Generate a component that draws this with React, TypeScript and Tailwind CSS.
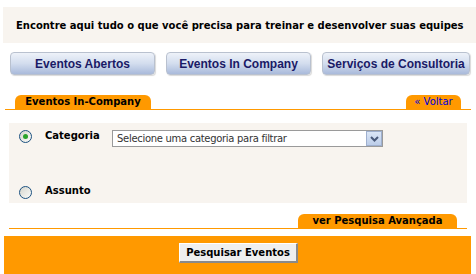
import React from "react";

const font = { fontFamily: '"DejaVu Sans", Verdana, sans-serif' };

function NavButton({ label, width }: { label: string; width: string }) {
  return (
    <div
      className={`${width} flex h-[23px] items-center justify-center rounded-[4px] border border-[#b9c1cf] bg-gradient-to-b from-[#eef2f9] via-[#d3ddee] to-[#a9badb] text-[12px] font-bold text-[#1a1a66] shadow-[1px_1px_1px_rgba(0,0,0,0.15)]`}
      style={{ fontFamily: '"Liberation Sans", Arial, sans-serif' }}
    >
      {label}
    </div>
  );
}

function Radio({ checked }: { checked?: boolean }) {
  return (
    <div className="flex h-[13px] w-[13px] shrink-0 items-center justify-center rounded-full border border-[#1c5180] bg-gradient-to-br from-[#d6d6ce] to-[#fbfbf9]">
      {checked && <div className="h-[5px] w-[5px] rounded-full bg-[#2aa32a]" />}
    </div>
  );
}

export default function App() {
  return (
    <div className="relative h-[274px] w-[476px] overflow-hidden bg-white" style={font}>
      {/* Intro band */}
      <div className="ml-[3px] mt-[7px] flex h-[36px] items-center bg-[#f8f4ef] pl-[13px] text-[10px] font-bold text-black">
        Encontre aqui tudo o que você precisa para treinar e desenvolver suas equipes
      </div>

      {/* Nav buttons */}
      <div className="ml-[10px] mt-[9px] flex gap-[11px]">
        <NavButton label="Eventos Abertos" width="w-[145px]" />
        <NavButton label="Eventos In Company" width="w-[145px]" />
        <NavButton label="Serviços de Consultoria" width="w-[148px]" />
      </div>

      {/* Tabs */}
      <div className="ml-[5px] mt-[20px] flex h-[15px] w-[466px] items-end justify-between border-b border-[#ff9900]">
        <div className="ml-[10px] flex h-[14px] w-[136px] items-center justify-center rounded-t-[6px] bg-[#ff9900] text-[10px] font-bold leading-none text-black">
          Eventos In-Company
        </div>
        <div className="mr-[10px] flex h-[14px] w-[55px] items-center justify-center rounded-t-[6px] bg-[#ff9900] text-[10px] leading-none text-[#0000dd]">
          « Voltar
        </div>
      </div>

      {/* Filter box */}
      <div className="ml-[9px] mt-[13px] h-[80px] w-[458px] bg-[#f8f4ef] pl-[10px] pt-[7px]">
        <div className="flex items-start">
          <Radio checked />
          <div className="ml-[13px] w-[67px] text-[10px] font-bold leading-[12px] text-black">Categoria</div>
          <div className="flex h-[17px] w-[271px] items-center border border-[#9a9a9a] bg-white">
            <span className="flex-1 pl-[4px] text-[10px] tracking-[-0.3px] text-[#333]">
              Selecione uma categoria para filtrar
            </span>
            <div className="flex h-[15px] w-[16px] items-center justify-center border border-[#9fb0cf] bg-gradient-to-b from-[#dbe6f6] to-[#bccde9]">
              <svg width="9" height="6" viewBox="0 0 9 6">
                <path d="M1 1 L4.5 4.5 L8 1" fill="none" stroke="#4a5a7a" strokeWidth="2" />
              </svg>
            </div>
          </div>
        </div>
        <div className="mt-[39px] flex items-start">
          <Radio />
          <div className="ml-[13px] -mt-[1px] text-[10px] font-bold leading-[12px] text-black">Assunto</div>
        </div>
      </div>

      {/* Advanced search tab */}
      <div className="ml-[9px] mt-[11px] flex h-[15px] w-[458px] items-end justify-end border-b border-[#ff9900]">
        <div className="mr-[10px] flex h-[14px] w-[159px] items-center justify-center rounded-t-[6px] bg-[#ff9900] text-[10px] font-bold leading-none text-black">
          ver Pesquisa Avançada
        </div>
      </div>

      {/* Footer */}
      <div className="ml-[4px] mt-[7px] h-[40px] w-[467px] bg-[#ff9900] pl-[175px] pt-[7px]">
        <button className="flex h-[20px] w-[119px] items-center justify-center border border-b-[2px] border-r-[2px] border-l-white border-t-white border-b-[#8a8a8a] border-r-[#8a8a8a] bg-[#efefef] text-[10px] font-bold text-black">
          Pesquisar Eventos
        </button>
      </div>
    </div>
  );
}
